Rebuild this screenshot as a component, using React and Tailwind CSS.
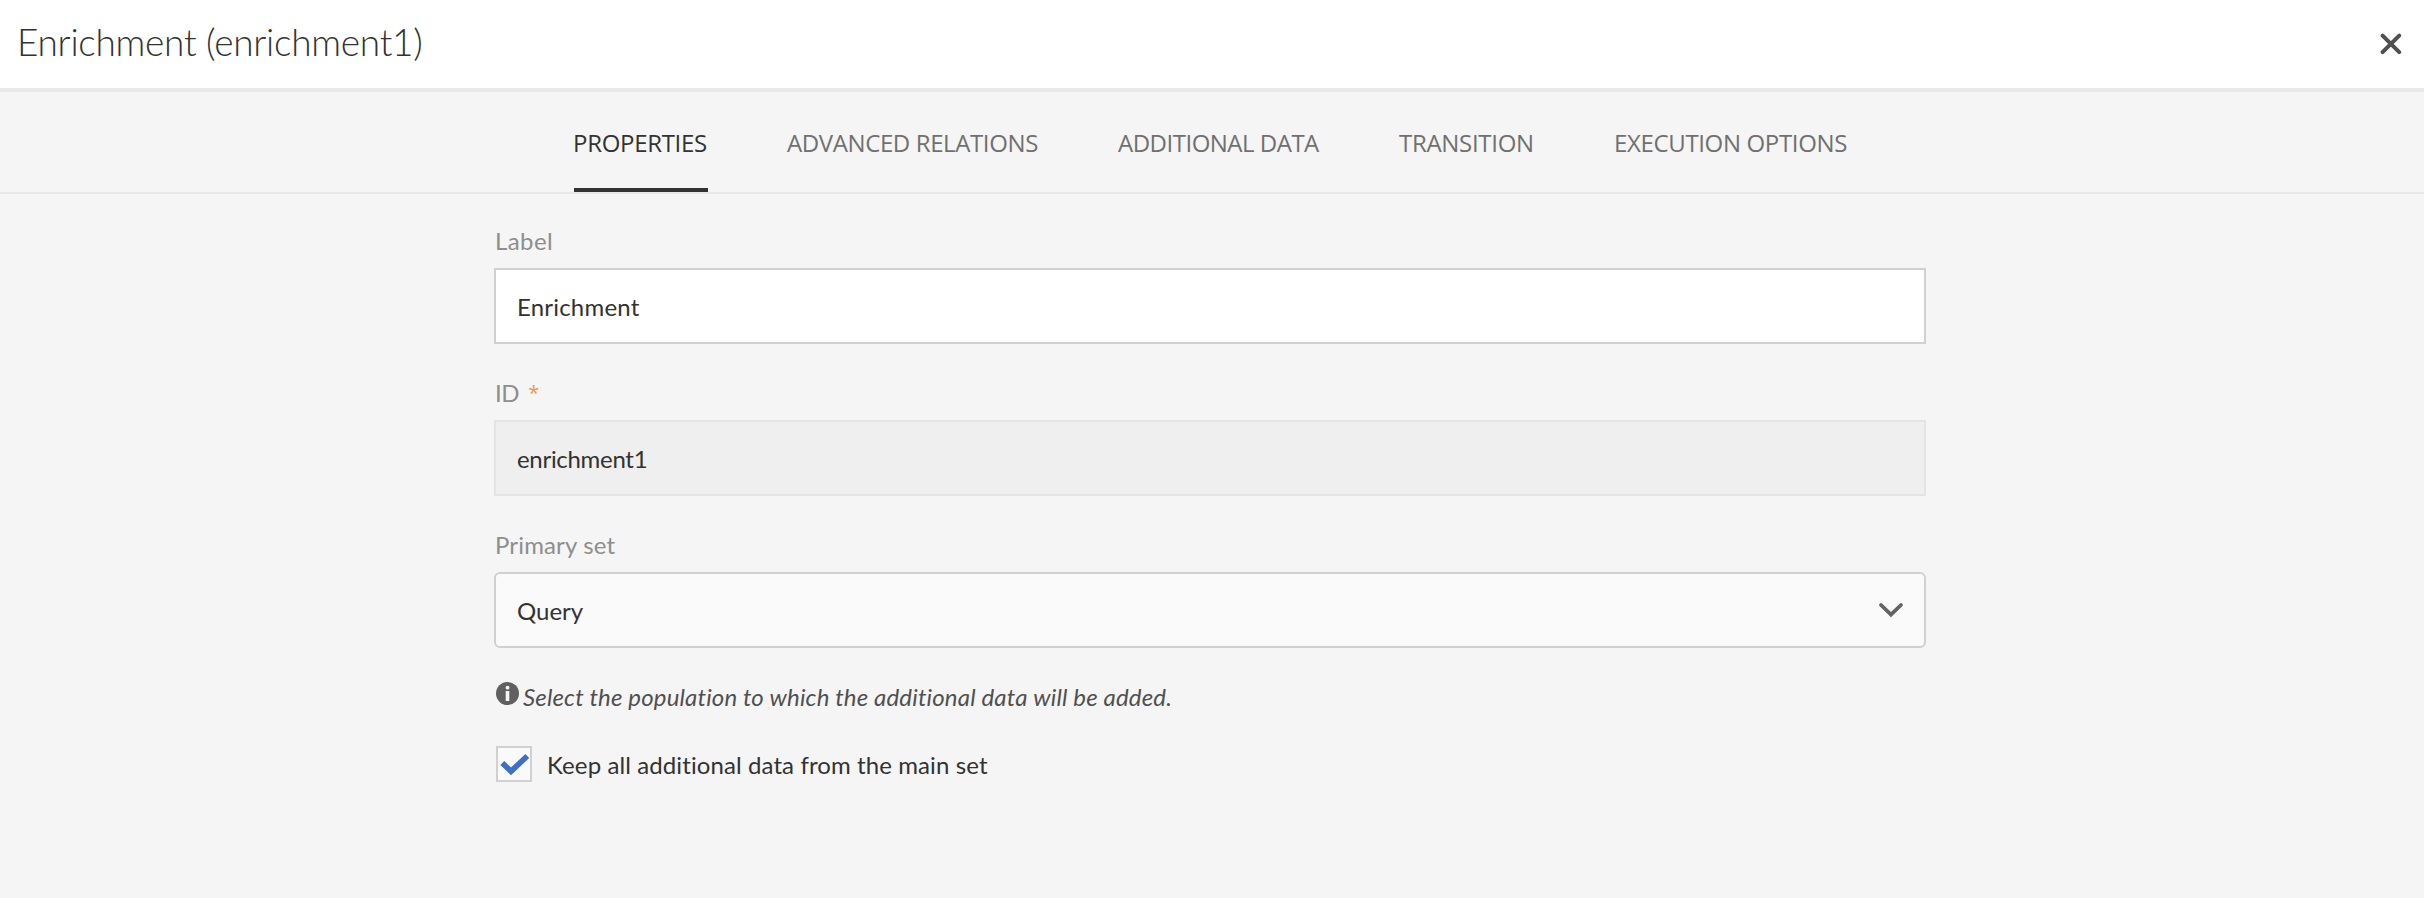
const tabs = [
  { name: 'PROPERTIES', size: 'w-[134px] tracking-[-0.3px]', active: true },
  { name: 'ADVANCED RELATIONS', size: 'w-[252px] tracking-[-0.39px]' },
  { name: 'ADDITIONAL DATA', size: 'w-[202px] tracking-[-0.5px]' },
  { name: 'TRANSITION', size: 'w-[136px] tracking-[-0.3px]' },
  { name: 'EXECUTION OPTIONS', size: 'w-[234px] tracking-[-0.35px]' },
];

function Header() {
  return (
    <header className="flex h-[92px] items-start justify-between border-b-4 border-[#e9e9e9] bg-white pl-[17px] pr-[22px]">
      <h1 className="text-[37px] font-light leading-[84px] tracking-[-0.28px] text-[#323232]">Enrichment (enrichment1)</h1>
      <button type="button" aria-label="Close" className="mt-[33px]">
        <svg width="22" height="22" viewBox="0 0 22 22" fill="none" stroke="#505050" strokeWidth="4" strokeLinecap="round">
          <path d="M2.6 2.6 19.2 19.2M19.2 2.6 2.6 19.2" />
        </svg>
      </button>
    </header>
  );
}

function Tabs() {
  return (
    <nav className="flex h-[102px] gap-[79px] border-b-2 border-[#e8e8e8] pl-[574px] font-['Open_Sans',sans-serif]">
      {tabs.map((t) => (
        <button
          key={t.name}
          type="button"
          className={`${t.size} flex h-[100px] items-start whitespace-nowrap border-b-4 pt-[33px] leading-9 ${
            t.active ? 'border-[#323232] text-[#323232]' : 'border-transparent text-[#707070]'
          }`}
        >
          <span className={t.active ? '-ml-px' : ''}>{t.name}</span>
        </button>
      ))}
    </nav>
  );
}

function Field({ label, labelClass, required, children }) {
  return (
    <div className="mb-[31px]">
      <div className={`mb-[9px] flex h-9 gap-[9px] pl-px leading-9 text-[#8e8e8e] ${labelClass}`}>
        <span>{label}</span>
        {required && <span className="font-['Open_Sans',sans-serif] text-[20px] text-[#f0974a]">*</span>}
      </div>
      {children}
    </div>
  );
}

export default function App() {
  return (
    <div className="h-[898px] w-[2424px] overflow-hidden bg-[#f5f5f5] font-[Lato,sans-serif] text-2xl text-[#323232]">
      <Header />
      <Tabs />
      <main className="ml-[494px] w-[1432px] pt-[29px]">
        <Field label="Label" labelClass="tracking-[0.4px]">
          <div className="h-[76px] border-2 border-[#d0d0d0] bg-white pl-[21px] pt-px leading-[72px] tracking-[0.2px]">Enrichment</div>
        </Field>
        <Field label="ID" labelClass="tracking-[-0.4px]" required>
          <div className="h-[76px] border-2 border-[#e4e4e4] bg-[#efefef] pl-[21px] pt-px leading-[72px] tracking-[-0.3px]">enrichment1</div>
        </Field>
        <Field label="Primary set" labelClass="tracking-[0.15px]">
          <div className="flex h-[76px] items-start justify-between rounded-md border-2 border-[#d0d0d0] bg-[#fafafa] pl-[21px] pr-[20px] pt-px leading-[72px]">
            <span>Query</span>
            <svg className="mt-[26px]" width="26" height="20" viewBox="0 0 26 20" fill="none" stroke="#646464" strokeWidth="3.8" strokeLinecap="round">
              <path d="M3 4 13 13.6 23 4" />
            </svg>
          </div>
        </Field>
        <div className="flex h-9 pl-0.5 leading-9">
          <svg className="mr-[4px] mt-[3px]" width="23" height="23" viewBox="0 0 23 23">
            <circle cx="11.5" cy="11.5" r="11.5" fill="#606060" />
            <circle cx="11.5" cy="5.7" r="1.9" fill="#f5f5f5" />
            <path d="M9.7 9h3.6v10H9.7Z" fill="#f5f5f5" />
          </svg>
          <span className="whitespace-nowrap italic tracking-[0.16px] text-[#505050] [font-variant-ligatures:none]">Select the population to which the additional data will be added.</span>
        </div>
        <label className="mt-[31px] flex h-9 pl-0.5">
          <span className="mr-[15px] h-9 w-9 border-2 border-[#d0d0d0] bg-[#fafafa]">
            <svg width="32" height="32" viewBox="0 0 32 32" fill="none" stroke="#3f6fc6" strokeWidth="5.6">
              <path d="m4.3 15 8.7 8.3L29.3 8" />
            </svg>
          </span>
          <span className="pt-px leading-9 tracking-[0.1px]">Keep all additional data from the main set</span>
        </label>
      </main>
    </div>
  );
}
